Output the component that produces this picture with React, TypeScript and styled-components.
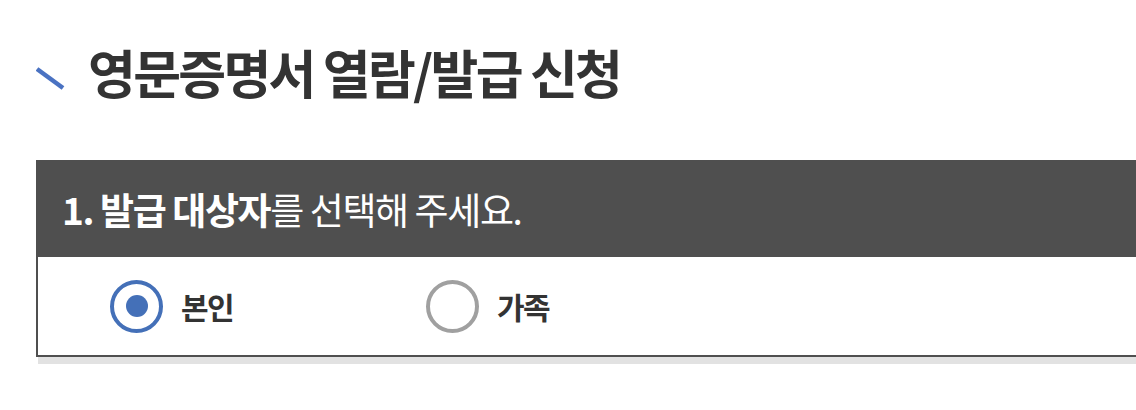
import styled, { createGlobalStyle } from 'styled-components';

const GlobalStyle = createGlobalStyle`
  html, body {
    margin: 0;
    padding: 0;
    background: #fff;
  }
  body {
    min-height: 100vh;
    overflow: hidden;
    font-family: "Noto Sans CJK KR", "Noto Sans", sans-serif;
  }
`;

interface RadioProps {
  checked?: boolean
}

const targets = [
  { label: '본인', checked: true },
  { label: '가족', checked: false },
];

const App: React.FC = () =>
  <Page>
    <GlobalStyle />
    <TitleRow>
      <Slash width="30" height="24" viewBox="0 0 30 24">
        <line x1="1" y1="2" x2="27" y2="21" stroke="#4a72c2" strokeWidth="4.5" />
      </Slash>
      <Title>영문증명서 열람/발급 신청</Title>
    </TitleRow>
    <Panel>
      <PanelHead>
        <strong>1. 발급 대상자</strong>를 선택해 주세요.
      </PanelHead>
      <Options>
        {targets.map(t =>
          <Option key={t.label}>
            <Radio checked={t.checked} />
            <OptionLabel>{t.label}</OptionLabel>
          </Option>
        )}
      </Options>
    </Panel>
  </Page>;

const Page = styled.div`
  padding: 39px 0 0 36px;
`;

const TitleRow = styled.div`
  display: flex;
  align-items: center;
  height: 66px;
`;

const Slash = styled.svg`
  flex: none;
  margin: 14px 22px 0 0;
`;

const Title = styled.h1`
  margin: 0;
  font-size: 52px;
  font-weight: 700;
  color: #333;
  letter-spacing: -2.7px;
  line-height: 1;
`;

const Panel = styled.div`
  margin-top: 55px;
  width: 1110px;
  border-left: 2px solid #4f4f4f;
  border-bottom: 2px solid #4f4f4f;
  box-shadow: 2px 7px 0 0 #e2e2e2;
  background: #fff;
`;

const PanelHead = styled.div`
  display: flex;
  align-items: center;
  height: 97px;
  margin-left: -2px;
  padding-left: 26px;
  background: #4f4f4f;
  color: #fff;
  font-size: 37px;
  letter-spacing: -1.4px;
  white-space: pre;

  strong {
    font-weight: 700;
  }
`;

const Options = styled.div`
  display: flex;
  align-items: center;
  height: 98px;
  padding-left: 72px;
`;

const Option = styled.label`
  display: flex;
  align-items: center;
  width: 316px;
`;

const Radio = styled.span<RadioProps>`
  position: relative;
  width: 53px;
  height: 53px;
  box-sizing: border-box;
  border-radius: 50%;
  border: 4px solid ${p => p.checked ? '#4470b8' : '#a0a0a0'};
  filter: blur(0.4px);

  &::after {
    content: '';
    display: ${p => p.checked ? 'block' : 'none'};
    position: absolute;
    left: 11.5px;
    top: 11.5px;
    width: 22px;
    height: 22px;
    border-radius: 50%;
    background: #4470b8;
  }
`;

const OptionLabel = styled.span`
  margin-left: 18px;
  font-size: 30px;
  font-weight: 700;
  color: #333;
  letter-spacing: -1.5px;
`;

export default App;
